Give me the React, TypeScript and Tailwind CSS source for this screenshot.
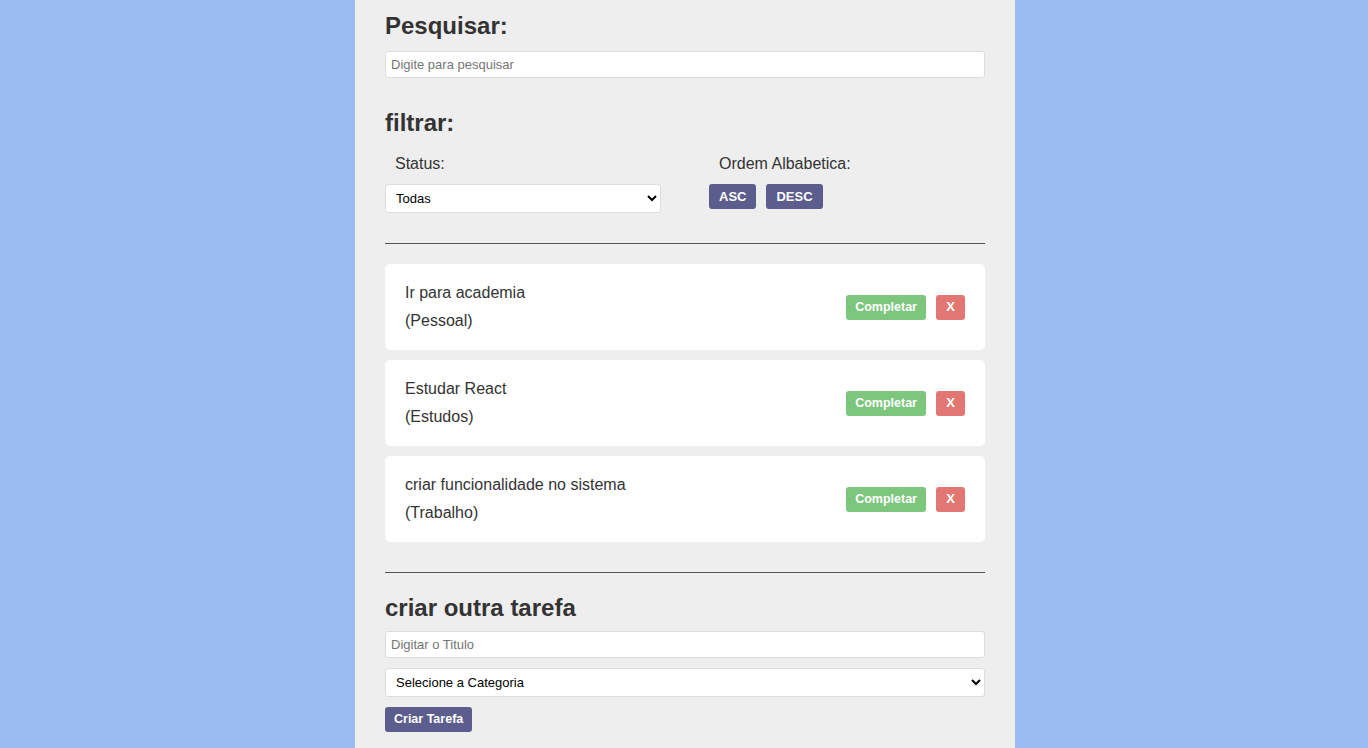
import { useState } from 'react'

const todos = [
  { text: 'Ir para academia', category: 'Pessoal' },
  { text: 'Estudar React', category: 'Estudos' },
  { text: 'criar funcionalidade no sistema', category: 'Trabalho' },
]

const App = () => {
  const [search, setSearch] = useState('')

  return (
    <div className="min-h-screen flex justify-center pl-[2px] bg-[#9abcf3] font-['Liberation_Sans',Arial,sans-serif] text-[#333]">
      <div className="w-[660px] min-h-[748px] bg-[#eeeeee] px-[30px]">
        {/* Search */}
        <h2 className="pt-[12px] text-[24px] font-bold leading-[28px] mb-[11px]">Pesquisar:</h2>
        <input
          type="text"
          value={search}
          onChange={(e) => setSearch(e.target.value)}
          placeholder="Digite para pesquisar"
          className="block w-full h-[27px] bg-white border border-[#ddd] rounded-[3px] px-[5px] text-[13px] text-black placeholder:text-[#757575] outline-none"
        />

        {/* Filter */}
        <h2 className="mt-[31px] text-[24px] font-bold leading-[28px]">filtrar:</h2>
        <div className="flex mt-[17px]">
          <div className="w-[324px]">
            <p className="ml-[10px] text-[16px] leading-[20px] mb-[10px]">Status:</p>
            <select className="block w-[276px] h-[29px] bg-white border border-[#ddd] rounded-[3px] pl-[6px] pr-[2px] text-[13px] text-black outline-none">
              <option>Todas</option>
              <option>Completas</option>
              <option>Incompletas</option>
            </select>
          </div>
          <div>
            <p className="ml-[10px] text-[16px] leading-[20px] mb-[10px]">Ordem Albabetica:</p>
            <div className="flex gap-[10px]">
              <button className="h-[25px] px-[10px] bg-[#5b5d8d] text-white text-[13px] font-bold rounded-[3px]">ASC</button>
              <button className="h-[25px] px-[10px] bg-[#5b5d8d] text-white text-[13px] font-bold rounded-[3px]">DESC</button>
            </div>
          </div>
        </div>

        <hr className="mt-[30px] border-0 border-t border-[#555]" />

        {/* Todo list */}
        <div className="mt-[20px] flex flex-col gap-[10px]">
          {todos.map((todo, index) => (
            <div key={index} className="flex items-center justify-between bg-white rounded-[5px] px-[20px] py-[15px]">
              <div className="text-[16px] leading-[28px]">
                <p>{todo.text}</p>
                <p>({todo.category})</p>
              </div>
              <div className="flex gap-[10px]">
                <button className="h-[25px] px-[9px] bg-[#7cc67e] text-white text-[12.5px] font-bold rounded-[3px]">Completar</button>
                <button className="h-[25px] w-[29px] bg-[#e27672] text-white text-[13px] font-bold rounded-[3px]">X</button>
              </div>
            </div>
          ))}
        </div>

        <hr className="mt-[30px] border-0 border-t border-[#555]" />

        {/* Create */}
        <h2 className="mt-[21px] text-[24px] font-bold leading-[28px] mb-[9px]">criar outra tarefa</h2>
        <input
          type="text"
          placeholder="Digitar o Titulo"
          className="block w-full h-[27px] bg-white border border-[#ddd] rounded-[3px] px-[5px] text-[13px] text-black placeholder:text-[#757575] outline-none"
        />
        <select className="block mt-[10px] w-full h-[29px] bg-white border border-[#ddd] rounded-[3px] pl-[6px] pr-[2px] text-[13px] text-black outline-none">
          <option>Selecione a Categoria</option>
          <option>Trabalho</option>
          <option>Pessoal</option>
          <option>Estudos</option>
        </select>
        <button className="mt-[10px] h-[25px] px-[9px] bg-[#5b5d8d] text-white text-[12.5px] font-bold rounded-[3px]">Criar Tarefa</button>
      </div>
    </div>
  )
}

export default App
